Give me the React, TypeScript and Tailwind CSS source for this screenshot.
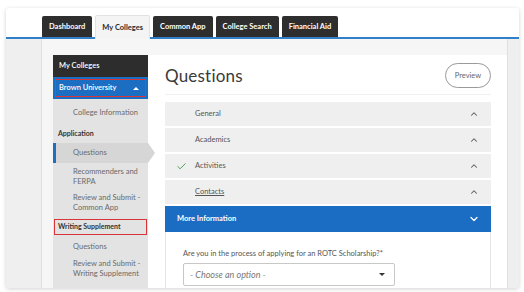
import React from 'react';
import { Check, ChevronUp, ChevronDown } from 'lucide-react';

const TABS = ['Dashboard', 'My Colleges', 'Common App', 'College Search', 'Financial Aid'];

const SECTIONS = [
  { name: 'General', done: false },
  { name: 'Academics', done: false },
  { name: 'Activities', done: true },
  { name: 'Contacts', done: false, underline: true },
];

const App: React.FC = () => {
  return (
    <div className="w-[524px] h-[292px] bg-white pt-[8px] pl-[6px] overflow-hidden" style={{ fontFamily: 'Lato, "Open Sans", sans-serif' }}>
      <div className="w-[513px] h-[280px] flex flex-col bg-[#efefef] rounded-[3px] shadow-[0_1px_4px_rgba(0,0,0,0.18)] overflow-hidden">
        {/* Tabs */}
        <div className="h-[31px] shrink-0 bg-white border-b-2 border-[#2f80c8] flex items-end pl-[36px] gap-[3px]">
          {TABS.map((t, i) =>
            i === 1 ? (
              <div key={t} className="relative -mb-[2px] h-[24px] px-[6px] flex items-center bg-[#f4f4f4] rounded-t-[2px] border-x border-t border-[#e2e2e2] text-[7.5px] font-bold text-[#2b2b2b]">
                {t}
              </div>
            ) : (
              <div key={t} className="h-[21px] px-[7px] flex items-center bg-[#2e2e2e] rounded-t-[2px] text-[7.5px] font-bold text-white">
                {t}
              </div>
            )
          )}
        </div>

        {/* Body */}
        <div className="flex-1 flex pl-[35px] pr-[11px] min-h-0">
          <div className="flex-1 flex bg-[#f6f6f6] border-x border-[#e0e0e0] pl-[11px] pt-[16px] min-h-0">
            {/* Sidebar */}
            <div className="w-[95px] shrink-0 flex flex-col bg-[#e3e3e3] text-[7.5px] leading-[9.5px]">
              <div className="h-[22px] bg-[#2d2d2d] text-white font-semibold flex items-center px-[6px]">My Colleges</div>
              <div className="h-[22px] bg-[#1c6ec3] p-[2px]">
                <div className="h-full border-[1.5px] border-[#d8343a] flex items-center justify-between pl-[3px] pr-[6px] text-white font-semibold">
                  <span>Brown University</span>
                  <span className="w-0 h-0 border-x-[3px] border-x-transparent border-b-[3.5px] border-b-white" />
                </div>
              </div>
              <div className="h-[28px] flex items-center pl-[20px] text-[#6a6a6a]">College Information</div>
              <div className="h-[14px] flex items-center pl-[5px] font-bold text-[#333] text-[7px]">Application</div>
              <div className="relative h-[20px] mt-[2px] flex items-center pl-[20px] bg-[#d6d6d6] text-[#6a6a6a]">
                <span className="absolute left-0 top-0 h-full w-[3px] bg-[#2270bd]" />
                Questions
                <span className="absolute -right-[7px] top-0 w-0 h-0 border-y-[10px] border-y-transparent border-l-[7px] border-l-[#d6d6d6]" />
              </div>
              <div className="py-[4px] pl-[20px] pr-[4px] text-[#6a6a6a]">Recommenders and FERPA</div>
              <div className="py-[3px] pl-[20px] pr-[4px] text-[#6a6a6a]">Review and Submit - Common App</div>
              <div className="mt-[4px] mx-[1px] h-[16px] border-[1.5px] border-[#d8343a] flex items-center pl-[3px] font-bold text-[#333] text-[7px]">Writing Supplement</div>
              <div className="h-[23px] flex items-center pl-[20px] text-[#6a6a6a]">Questions</div>
              <div className="py-[1px] pl-[20px] pr-[4px] text-[#6a6a6a]">Review and Submit - Writing Supplement</div>
            </div>

            {/* Content */}
            <div className="flex-1 bg-white flex flex-col pl-[17px] pr-[16px] min-w-0">
              <div className="h-[40px] shrink-0 flex items-center justify-between border-b border-[#f1f1f1]">
                <h1 className="text-[17px] text-[#3a3a3a] tracking-[0.2px] mt-[2px]">Questions</h1>
                <button className="w-[46px] h-[25px] rounded-full border border-[#9a9a9a] text-[7.5px] text-[#666] mt-[2px]">Preview</button>
              </div>
              <div className="mt-[7px] flex flex-col gap-[2px]">
                {SECTIONS.map((s) => (
                  <div key={s.name} className="h-[24px] bg-[#efefef] flex items-center pr-[12px] text-[7.5px] text-[#555]">
                    <span className="w-[30px] flex justify-center pl-[3px]">
                      {s.done && <Check size={11} strokeWidth={2} className="text-[#3b9b4b]" />}
                    </span>
                    <span className={`flex-1 ${s.underline ? 'underline' : ''}`}>{s.name}</span>
                    <ChevronUp size={10} strokeWidth={2.5} className="text-[#5a5a5a]" />
                  </div>
                ))}
                <div className="h-[26px] bg-[#1a6dc2] flex items-center justify-between pl-[12px] pr-[11px] text-[7.5px] font-bold text-white">
                  <span>More Information</span>
                  <ChevronDown size={12} strokeWidth={2.5} className="text-white" />
                </div>
              </div>
              <div className="flex-1 border-x border-[#e4e4e4] pl-[17px] pt-[16px]">
                <p className="text-[7.5px] text-[#555]">Are you in the process of applying for an ROTC Scholarship?*</p>
                <div className="mt-[4px] w-[212px] h-[23px] border border-[#c8c8c8] rounded-[2px] flex items-center justify-between pl-[6px] pr-[9px]">
                  <span className="text-[9px] italic text-[#777]">- Choose an option -</span>
                  <span className="w-0 h-0 border-x-[3px] border-x-transparent border-t-[3.5px] border-t-[#333]" />
                </div>
              </div>
            </div>
          </div>
        </div>
      </div>
    </div>
  );
};

export default App;
